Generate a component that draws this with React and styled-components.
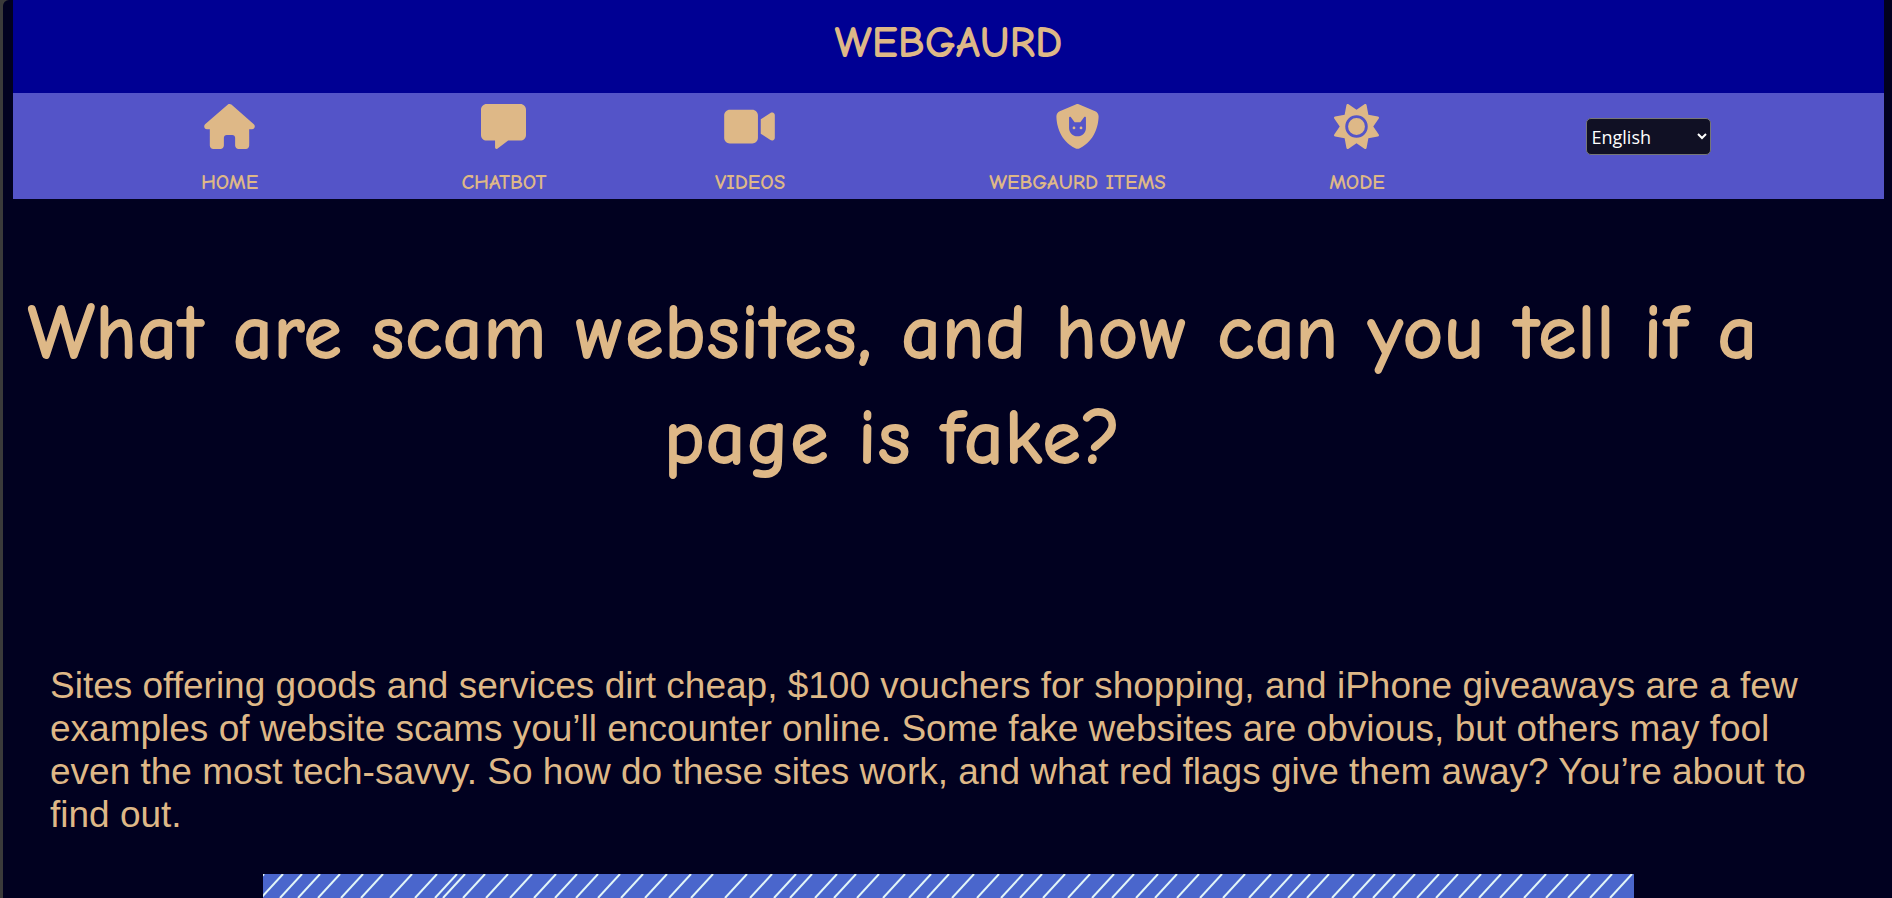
import React from "react";
import styled, { createGlobalStyle } from "styled-components";
import { FaHouse, FaMessage, FaVideo, FaShieldCat, FaSun } from "react-icons/fa6";

const GlobalStyle = createGlobalStyle`
  * { box-sizing: border-box; }
  body { margin: 0; padding-left: 3px; background: #3a3a3a; color: burlywood; }
`;

const comic = `"Comic Sans MS", "Comic Neue", "DejaVu Sans", sans-serif`;

const Page = styled.div`
  min-height: 100vh;
  overflow: hidden;
  border-top-left-radius: 6px;
  padding: 0 8px 0 10px;
  background: #010120;
`;

const Banner = styled.header`
  height: 93px;
  padding-top: 18px;
  background: #000093;
  text-align: center;
`;

const Brand = styled.h1`
  margin: 0;
  font: bold 44px/50px ${comic};
`;

const Nav = styled.nav`
  display: grid;
  grid-template-columns: 281fr 268fr 224fr 431fr 128fr 454fr;
  justify-items: center;
  height: 106px;
  padding: 11px 9px 0 76px;
  background: #5454c8;
`;

const NavLink = styled.a`
  display: flex;
  flex-direction: column;
  align-items: center;
  gap: 19px;
  color: inherit;
  text-decoration: none;
  white-space: nowrap;
  font: bold 21px/28px ${comic};

  svg {
    width: 51px;
    height: 45px;
  }
`;

const Language = styled.select`
  width: 125px;
  height: 37px;
  margin-top: 14px;
  padding: 0 4px 0 1px;
  border: 1px solid #767676;
  border-radius: 5px;
  background: #101024;
  color: #fff;
  font: 18px "Segoe UI", "Open Sans", sans-serif;
`;

const Title = styled.h2`
  width: 94%;
  margin: 82px 0 0;
  text-align: center;
  font: bold 80px/105px ${comic};
`;

const Intro = styled.p`
  margin: 173px 37px 0;
  font: 37px/43px Arial, "Liberation Sans", sans-serif;
`;

const Picture = styled.svg`
  display: block;
  width: calc(100% - 500px);
  height: 24px;
  margin: 38px auto 0;
  background: #4a66cc;
`;

const links = [
  ["HOME", FaHouse],
  ["CHATBOT", FaMessage],
  ["VIDEOS", FaVideo],
  ["WEBGAURD ITEMS", FaShieldCat],
  ["MODE", FaSun],
];

const stripes = [
  1, 20, 39, 57, 77, 100, 120, 149, 174, 194, 202, 222, 245, 269, 293, 314, 335, 357,
  380, 404, 428, 450, 484, 509, 533, 549, 574, 593, 616, 642, 668, 686, 711, 736, 760,
  779, 802, 827, 851, 871, 895, 914, 936, 959, 982, 1008, 1029, 1047, 1066, 1091, 1112,
  1132, 1152, 1176, 1195, 1218, 1238, 1259, 1283, 1305, 1327, 1349, 1369,
];

export default function App() {
  return (
    <Page>
      <GlobalStyle />
      <Banner><Brand>WEBGAURD</Brand></Banner>
      <Nav>
        {links.map(([label, Icon]) => (
          <NavLink href="#" key={label}><Icon aria-hidden="true" />{label}</NavLink>
        ))}
        <Language aria-label="Language"><option>English</option></Language>
      </Nav>
      <main>
        <Title>What are scam websites, and how can you tell if a page is fake?</Title>
        <Intro>
          Sites offering goods and services dirt cheap, $100 vouchers for shopping, and iPhone giveaways are a few
          examples of website scams you’ll encounter online. Some fake websites are obvious, but others may fool
          even the most tech-savvy. So how do these sites work, and what red flags give them away? You’re about to
          find out.
        </Intro>
        <Picture viewBox="0 0 1371 24" preserveAspectRatio="none" aria-hidden="true">
          {stripes.map((x) => (
            <line key={x} x1={x} y1="0" x2={x - 22} y2="24" stroke="#e2f6f8" strokeWidth="2" />
          ))}
        </Picture>
      </main>
    </Page>
  );
}
